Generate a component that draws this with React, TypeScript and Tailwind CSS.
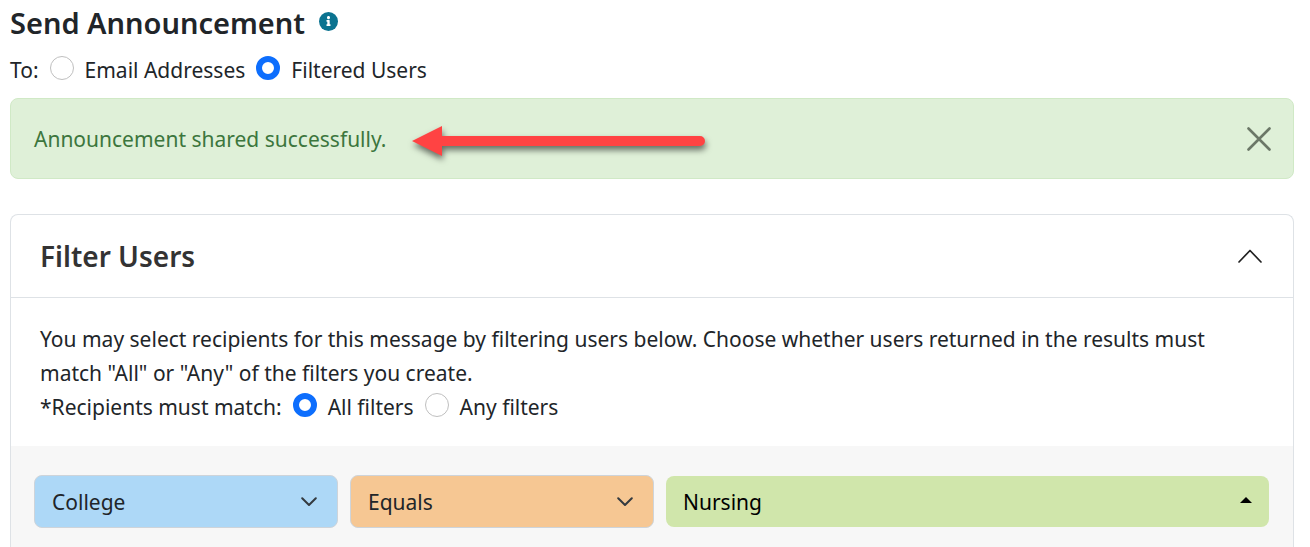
import { useState, type ReactNode } from "react";

const radioClass =
  "mb-1 size-6 shrink-0 appearance-none rounded-full border border-[#bfbfbf] bg-white checked:border-[6px] checked:border-[#0d6efd]";

function Radio({ name, label, checked, onSelect }: { name: string; label: string; checked: boolean; onSelect: () => void }) {
  return (
    <label className="flex items-center gap-[11px]">
      <input type="radio" name={name} checked={checked} onChange={onSelect} className={radioClass} />
      {label}
    </label>
  );
}

function Dropdown({ label, options, className, children }: { label: string; options: string[]; className: string; children: ReactNode }) {
  return (
    <div className="relative flex items-center">
      <select aria-label={label} className={"w-full appearance-none rounded-lg pl-[17px] pr-12 " + className}>
        {options.map((option) => (
          <option key={option}>{option}</option>
        ))}
      </select>
      {children}
    </div>
  );
}

function ChevronDown() {
  return (
    <svg viewBox="0 0 16 10" className="pointer-events-none absolute right-[21px] h-[10px] w-4" fill="none" stroke="#343a40" strokeWidth="2" strokeLinecap="round" strokeLinejoin="round" aria-hidden="true">
      <path d="M1.2 1.2 8 8 14.800 1.2" />
    </svg>
  );
}

export default function App() {
  const [audience, setAudience] = useState("filtered");
  const [match, setMatch] = useState("all");
  const [alertOpen, setAlertOpen] = useState(true);
  const [expanded, setExpanded] = useState(true);

  return (
    <main className="flex min-h-screen flex-col bg-white pl-[10px] pr-4 font-['Noto_Sans',sans-serif] text-[21px] leading-[34px] text-[#212529]">
      <div className="flex h-[46px] items-center gap-[14px]">
        <h1 className="text-[29px] font-semibold">Send Announcement</h1>
        <button type="button" aria-label="About announcements" className="mb-1">
          <svg viewBox="0 0 512 512" className="size-[19px]" aria-hidden="true">
            <circle cx="256" cy="256" r="256" fill="#0b7390" />
            <path
              fill="#fff"
              d="M256 110c23.200 0 42 18.800 42 42s-18.800 42-42 42-42-18.800-42-42 18.800-42 42-42zm56 254c0 6.600-5.400 12-12 12h-88c-6.600 0-12-5.400-12-12v-24c0-6.600 5.400-12 12-12h12v-64h-12c-6.600 0-12-5.400-12-12v-24c0-6.600 5.400-12 12-12h64c6.600 0 12 5.400 12 12v100h12c6.600 0 12 5.400 12 12v24z"
            />
          </svg>
        </button>
      </div>

      <div role="radiogroup" aria-label="Recipients" className="mt-[7px] flex h-[45px] items-start gap-[11px]">
        <span>To:</span>
        <Radio name="audience" label="Email Addresses" checked={audience === "email"} onSelect={() => setAudience("email")} />
        <Radio name="audience" label="Filtered Users" checked={audience === "filtered"} onSelect={() => setAudience("filtered")} />
      </div>

      {alertOpen && (
        <div role="alert" className="mb-[35px] flex h-[81px] items-center rounded-lg border border-[#d0e9c6] bg-[#dff0d8] pl-[23px] pr-[22px] text-[#3c763d]">
          <p>Announcement shared successfully.</p>
          <svg viewBox="0 0 300 40" className="ml-6 h-10 w-[300px] overflow-visible" aria-hidden="true">
            <g className="drop-shadow-[1px_4px_3px_rgba(0,0,0,0.55)]" fill="#ff4343">
              <path d="M2 22 32 7v10h258a5 5 0 0 1 0 10H32v10z" />
            </g>
          </svg>
          <button type="button" aria-label="Dismiss" onClick={() => setAlertOpen(false)} className="ml-auto">
            <svg viewBox="0 0 24 24" className="size-6" fill="none" stroke="#6b7767" strokeWidth="2.6" strokeLinecap="round" aria-hidden="true">
              <path d="M1.500 1.500 22.500 22.500M22.500 1.500 1.500 22.500" />
            </svg>
          </button>
        </div>
      )}

      <section className="flex grow flex-col rounded-t-lg border border-b-0 border-[#dee2e6]">
        <div className="flex h-[83px] items-center justify-between border-b border-[#dee2e6] pl-[29px] pr-[31px]">
          <h2 className="text-[28px] font-semibold text-[#333]">Filter Users</h2>
          <button type="button" aria-label="Toggle filters" aria-expanded={expanded} onClick={() => setExpanded(!expanded)}>
            <svg viewBox="0 0 24 14" className="h-[14px] w-6" fill="none" stroke="#212121" strokeWidth="1.7" strokeLinecap="round" strokeLinejoin="round" aria-hidden="true">
              <path d="M1 13 12 1.500 23 13" />
            </svg>
          </button>
        </div>

        {expanded && (
          <>
            <div className="px-[29px] pb-[22px] pt-6">
              <p>
                You may select recipients for this message by filtering users below. Choose whether users returned in the results must
                match "All" or "Any" of the filters you create.
              </p>
              <div role="radiogroup" aria-label="Filter matching" className="flex items-center gap-[11px]">
                <span>*Recipients must match:</span>
                <Radio name="match" label="All filters" checked={match === "all"} onSelect={() => setMatch("all")} />
                <Radio name="match" label="Any filters" checked={match === "any"} onSelect={() => setMatch("any")} />
              </div>
            </div>

            <div className="grid grow grid-cols-[304fr_304fr_603fr] content-start items-center gap-3 bg-[#f7f7f7] pb-5 pl-[23px] pr-6 pt-[29px]">
              <Dropdown label="Field" options={["College", "Department"]} className="h-[53px] border border-[#ced4da] bg-[#add8f7]">
                <ChevronDown />
              </Dropdown>
              <Dropdown label="Operator" options={["Equals", "Does not equal"]} className="h-[53px] border border-[#ced4da] bg-[#f6c793]">
                <ChevronDown />
              </Dropdown>
              <Dropdown label="Value" options={["Nursing", "Engineering"]} className="h-[51px] bg-[#d0e6ab] text-black">
                <svg viewBox="0 0 12 6" className="pointer-events-none absolute right-[17px] mb-1 h-[6px] w-3" aria-hidden="true">
                  <path d="M0 6 6 0 12 6z" fill="#000" />
                </svg>
              </Dropdown>
            </div>
          </>
        )}
      </section>
    </main>
  );
}
